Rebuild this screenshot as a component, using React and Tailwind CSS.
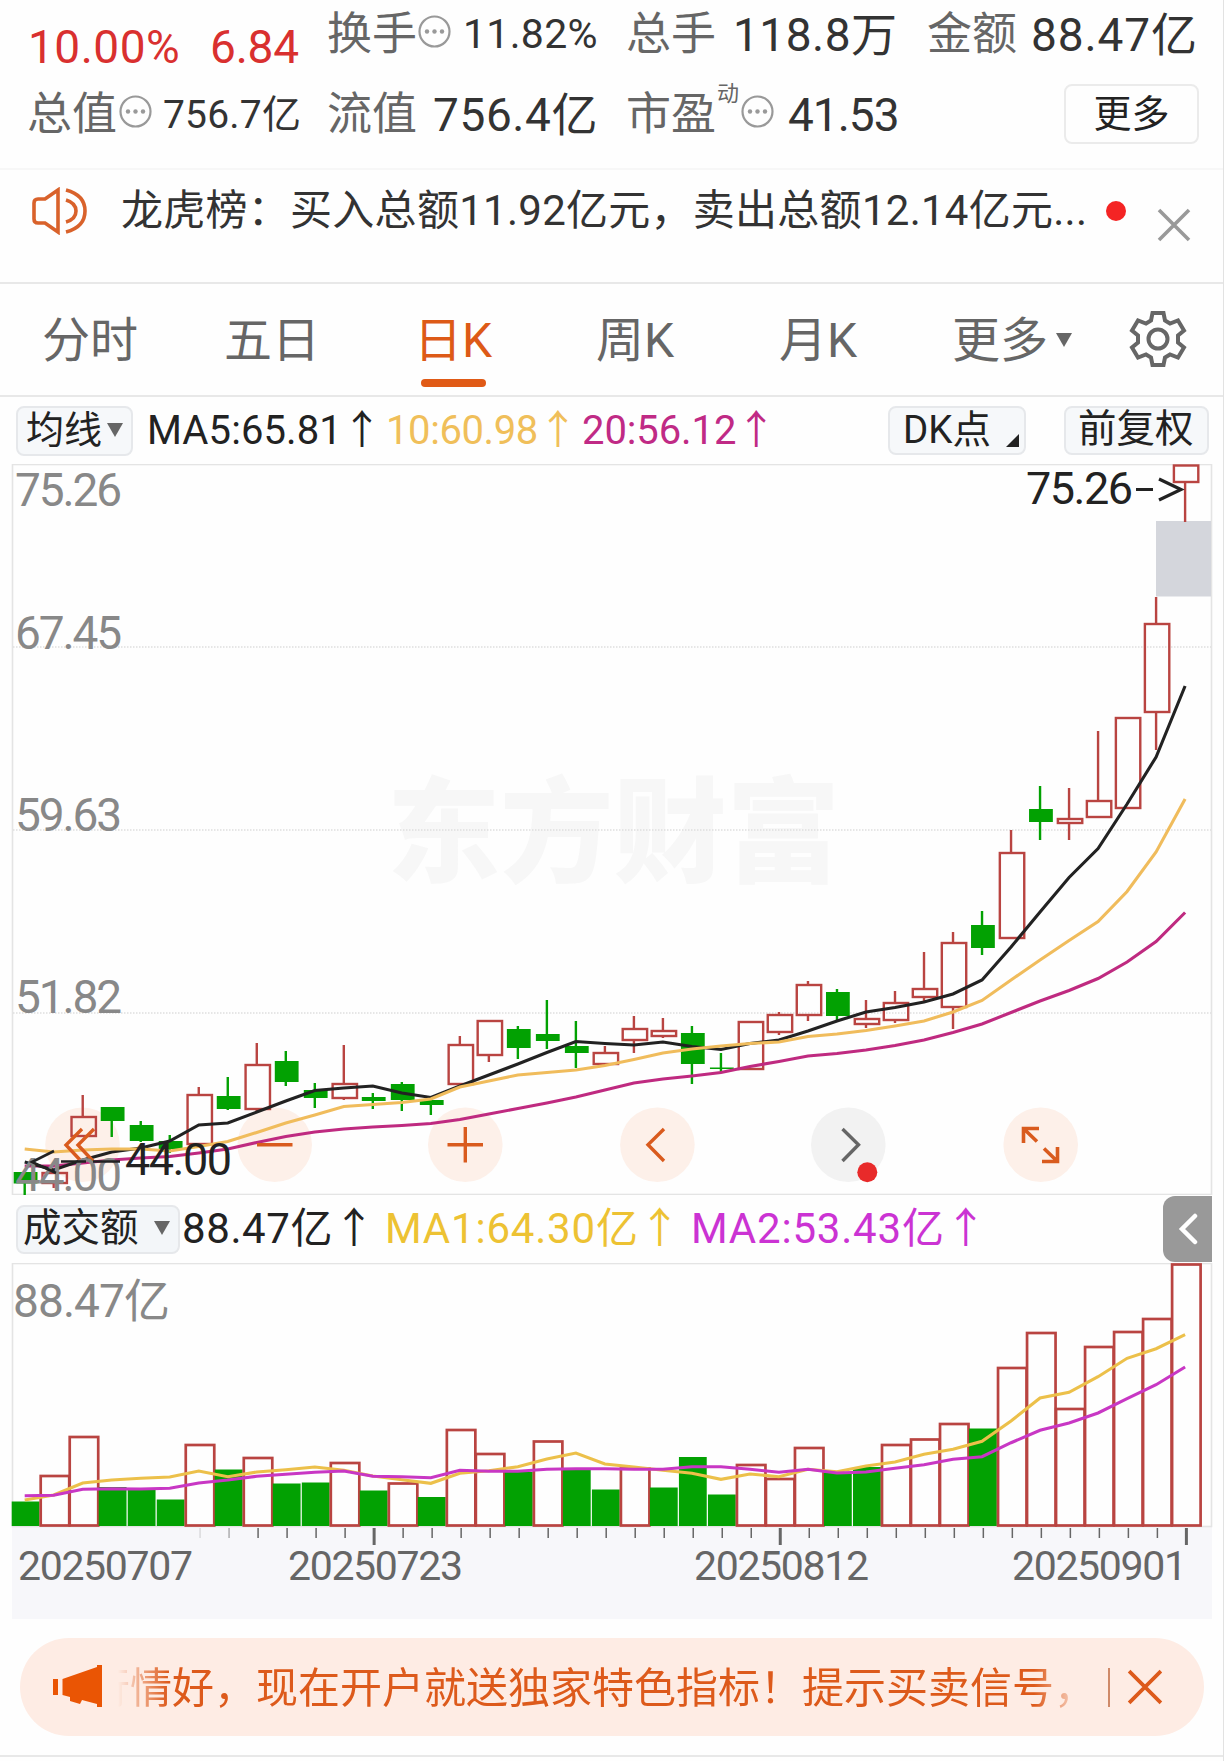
// Daily candles, in chart pixels: [up, high, bodyTop, bodyBottom, low]
const CANDLES = [
  [0, 1172, 1172, 1183.5, 1195], [1, 1173, 1173, 1183, 1188], [1, 1095, 1117, 1136, 1136], [0, 1107, 1107, 1121, 1137],
  [0, 1121, 1125, 1141, 1142], [0, 1135, 1141, 1149, 1153], [1, 1087, 1095, 1144, 1144], [0, 1077, 1096, 1109, 1110],
  [1, 1043, 1065, 1109, 1111], [0, 1051, 1061, 1082, 1086], [0, 1083, 1090, 1098, 1108], [1, 1045, 1084, 1098, 1100],
  [0, 1093, 1097, 1101, 1109], [0, 1082, 1084, 1100, 1111], [0, 1100, 1100, 1105, 1115], [1, 1036, 1045, 1084, 1086],
  [1, 1020, 1021, 1055, 1062], [0, 1026, 1029, 1048, 1059], [0, 1000, 1034, 1041, 1049], [0, 1021, 1046, 1053, 1068],
  [1, 1046, 1053, 1064, 1064], [1, 1016, 1029, 1040, 1053], [1, 1018, 1031, 1036, 1038], [0, 1026, 1033, 1064, 1084],
  [0, 1053, 1067.5, 1069, 1072], [1, 1022, 1022, 1069, 1069], [1, 1012, 1015, 1032, 1035], [1, 981, 985, 1015, 1021],
  [0, 989, 992, 1016, 1020], [1, 1000, 1019, 1024, 1028], [1, 991, 1003, 1020, 1023], [1, 952, 989, 997, 1002],
  [1, 932, 943, 1007, 1029], [0, 911, 925, 948, 955], [1, 830, 853, 938, 938], [0, 786, 809, 822, 840],
  [1, 788, 819, 823, 840], [1, 731, 801, 817, 817], [1, 718, 718, 808, 808], [1, 597, 624, 712, 750],
  [1, 465, 465.5, 482, 522],
];

const MA5 = [
  1162, 1170, 1160, 1152, 1148, 1141, 1125, 1123, 1112, 1101, 1090.5, 1088, 1086, 1093, 1097.5, 1086, 1075, 1064, 1052.5,
  1041.5, 1043.5, 1045, 1042, 1046.5, 1049.5, 1043.5, 1040, 1031, 1021, 1012, 1007.5, 1002, 994, 980, 947, 912, 877.5,
  848.5, 804, 757, 686,
];
const MA10 = [
  1149, 1152, 1150, 1149, 1149, 1151, 1146.5, 1141.5, 1132.5, 1123, 1115, 1106.5, 1104.5, 1102.5, 1099, 1087, 1081, 1075,
  1072.5, 1070, 1065.5, 1059.5, 1053, 1049, 1046, 1043.5, 1042, 1036.5, 1034, 1030.5, 1026, 1021, 1012, 1000.5, 980, 960,
  940.5, 921.5, 891.5, 852, 799,
];
const MA20 = [
  1166, 1166, 1163, 1160, 1158, 1156.5, 1153, 1149, 1142.5, 1136.5, 1132, 1129, 1127, 1125.5, 1123.5, 1119.5, 1114, 1108.5,
  1103, 1097, 1090, 1083, 1079, 1076, 1072.5, 1066.5, 1061.5, 1056, 1053.5, 1050, 1045.5, 1040, 1032.5, 1024, 1012.5, 1001,
  990.5, 978.5, 962, 941.5, 912.5,
];

// Top of every volume bar
const VOLUMES = [
  1501.5, 1476, 1437, 1487, 1490, 1499.5, 1445, 1469.5, 1458, 1483.5, 1482.5, 1463, 1490.5, 1483.5, 1497, 1430, 1454, 1472,
  1441.5, 1470, 1489.5, 1468.5, 1487.5, 1457, 1494.5, 1465, 1479, 1448, 1473, 1467, 1445, 1439.5, 1424, 1428.5, 1368, 1333,
  1409, 1347, 1332, 1319, 1264.5,
];
// Days drawn as solid green volume bars
const VOL_DOWN = [0, 3, 4, 5, 7, 9, 10, 12, 14, 17, 19, 20, 22, 23, 24, 28, 29, 33];
const VOL_MA1 = [
  1500, 1495, 1483, 1480, 1478.3, 1477, 1471, 1476.7, 1472, 1469.7, 1467, 1470.3, 1476, 1479.7, 1483.3, 1473.3, 1470.7,
  1466.7, 1459, 1453, 1464, 1467, 1470.3, 1473.3, 1479.3, 1474, 1476.7, 1469.3, 1471.7, 1466, 1462, 1454.3, 1449.3, 1441.3,
  1421, 1398, 1392.3, 1376.7, 1358.3, 1348.7, 1334.7,
];
const VOL_MA2 = [
  1495.7, 1495.3, 1489.3, 1488.7, 1489, 1488.3, 1483, 1480, 1476.3, 1474.3, 1472.3, 1471, 1476.3, 1476.7, 1477.7, 1470.3,
  1471.3, 1471.3, 1469.3, 1468.7, 1468.7, 1469.3, 1469.3, 1466.7, 1466.7, 1469.3, 1472.3, 1469.3, 1473, 1472, 1468.3,
  1464.7, 1459.3, 1456.7, 1442.7, 1430.3, 1423, 1413, 1398.7, 1384.7, 1367,
];

const RED = "#b94441";
const GREEN = "#02a102";

const xAt = (i) => 24.7 + i * 29.01;
const toPoints = (ys) => ys.map((y, i) => `${xAt(i)},${y}`).join(" ");

function Dots() {
  return (
    <svg width="33" height="33" viewBox="0 0 33 33" className="mb-[7px] shrink-0">
      <circle cx="16.5" cy="16.5" r="15" fill="none" stroke="#999" strokeWidth="2.2" />
      <circle cx="9" cy="16.5" r="2.2" fill="#999" />
      <circle cx="16.5" cy="16.5" r="2.2" fill="#999" />
      <circle cx="24" cy="16.5" r="2.2" fill="#999" />
    </svg>
  );
}

function Close({ size, color, width }) {
  return (
    <svg width={size} height={size} viewBox="0 0 34 34" className="shrink-0">
      <path d="M2 2 32 32M32 2 2 32" stroke={color} strokeWidth={width} fill="none" />
    </svg>
  );
}

function Triangle({ className }) {
  return (
    <svg width="16" height="14" viewBox="0 0 16 14" className={className}>
      <path d="M0 0H16L8 14Z" fill="#666" />
    </svg>
  );
}

function Quotes() {
  return (
    <div className="h-[170px] border-b-2 border-[#f7f7f7] text-[#333]">
      <div className="grid h-[70px] grid-cols-[327px_299px_301px_297px] items-center whitespace-nowrap">
        <div className="flex pl-[28px] pt-[23px] text-[46px] leading-[46px] text-[#d9302f]">
          <span className="w-[182px] tracking-[0.5px]">10.00%</span>
          <span className="tracking-[-0.2px]">6.84</span>
        </div>
        <div className="flex items-center">
          <span className="w-[91px] text-[45px] leading-[60px] text-[#666]">换手</span>
          <Dots />
          <span className="ml-[12px] text-[41px] tracking-[0.3px]">11.82%</span>
        </div>
        <div className="flex items-center">
          <span className="w-[107px] text-[45px] leading-[60px] text-[#666]">总手</span>
          <span className="text-[46px] tracking-[0.5px]">118.8万</span>
        </div>
        <div className="flex items-center">
          <span className="w-[104px] text-[45px] leading-[60px] text-[#666]">金额</span>
          <span className="text-[46px] tracking-[0.9px]">88.47亿</span>
        </div>
      </div>
      <div className="grid h-[90px] grid-cols-[327px_299px_301px_297px] items-center whitespace-nowrap">
        <div className="flex items-center pl-[27px]">
          <span className="w-[92px] text-[45px] leading-[60px] text-[#666]">总值</span>
          <Dots />
          <span className="ml-[11px] text-[39px] tracking-[0.2px]">756.7亿</span>
        </div>
        <div className="flex items-center">
          <span className="w-[106px] text-[45px] leading-[60px] text-[#666]">流值</span>
          <span className="text-[46px] tracking-[0.6px]">756.4亿</span>
        </div>
        <div className="flex items-center">
          <span className="w-[91px] text-[45px] leading-[60px] text-[#666]">市盈</span>
          <span className="w-[24px] pb-[42px] text-[22px] leading-[22px] text-[#666]">动</span>
          <Dots />
          <span className="ml-[14px] text-[46px] tracking-[-1px]">41.53</span>
        </div>
        <div className="flex items-center pb-[3px] pl-[137px]">
          <button className="h-[60px] w-[135px] rounded-[8px] border-2 border-[#ebebeb] text-[38px] leading-[52px] text-[#222]">
            更多
          </button>
        </div>
      </div>
    </div>
  );
}

function Notice() {
  return (
    <div className="flex h-[114px] items-start whitespace-nowrap border-b-2 border-[#e8e8e8] pl-[31px]">
      <svg width="57" height="48" viewBox="0 0 57 48" className="mt-[17px] shrink-0" fill="none" stroke="#d9622b" strokeWidth="3.6">
        <path d="M27 3 14 12H7Q3 12 3 16V32Q3 36 7 36H14L27 45Z" />
        <path d="M35 13Q45 16 45 24T35 35M35 3Q54 8 54 24T35 45" />
      </svg>
      <span className="ml-[33px] w-[972px] text-[42px] leading-[82px] tracking-[0.27px] text-[#333]">
        龙虎榜：买入总额11.92亿元，卖出总额12.14亿元...
      </span>
      <span className="ml-[13px] mt-[31px] h-[20px] w-[20px] shrink-0 rounded-full bg-[#f42424]" />
      <span className="ml-[31px] mt-[38px]">
        <Close size={34} color="#999" width={3.6} />
      </span>
    </div>
  );
}

function Tabs() {
  return (
    <div className="flex h-[113px] whitespace-nowrap border-b-2 border-[#e8e8e8] pl-[42px] text-[48px] leading-[113px] text-[#666]">
      <span className="w-[182px]">分时</span>
      <span className="w-[190px]">五日</span>
      <span className="relative w-[182px] text-[#dd5a17]">
        日K
        <i className="absolute left-[7px] top-[95px] h-[8px] w-[65px] rounded-full bg-[#e05a16]" />
      </span>
      <span className="w-[183px]">周K</span>
      <span className="w-[173px]">月K</span>
      <span className="w-[104px]">更多</span>
      <Triangle className="mt-[49px]" />
      <svg width="60" height="60" viewBox="0 0 60 60" className="ml-[56px] mt-[25px]" fill="none" stroke="#666" strokeWidth="4">
        <path d="M24.5 4H35.5L37 11.5L42 14.5L50 11.500L56 21.5L50 26.5V33.5L56 38.5L50 48.5L42 45.5L37 48.5L35.5 56H24.5L23 48.5L18 45.5L10 48.5L4 38.5L10 33.5V26.5L4 21.5L10 11.5L18 14.5L23 11.5Z" />
        <circle cx="30" cy="30" r="9.5" />
      </svg>
    </div>
  );
}

function MaBar() {
  return (
    <div className="flex h-[67px] items-center whitespace-nowrap pl-[16px] text-[40px] leading-[60px]">
      <div className="flex h-[50px] w-[117px] items-center rounded-[8px] border-2 border-[#e6e8eb] bg-[#f6f8fa] pb-[2px] pl-[8px] text-[38px] text-[#222]">
        <span className="w-[81px]">均线</span>
        <Triangle />
      </div>
      <span className="ml-[14px] w-[239px] tracking-[0.1px] text-[#222]">MA5:65.81↑</span>
      <span className="w-[196px] tracking-[-0.4px] text-[#f0bf5a]">10:60.98↑</span>
      <span className="w-[306px] tracking-[-0.1px] text-[#c02a85]">20:56.12↑</span>
      <div className="flex h-[49px] w-[138px] items-center rounded-[8px] border-2 border-[#e6e8eb] bg-[#f6f8fa] pb-[2px] pl-[13px] text-[38.5px] text-[#222]">
        <span className="w-[103px]">DK点</span>
        <svg width="13" height="13" viewBox="0 0 13 13" className="mt-[22px]">
          <path d="M13 0V13H0Z" fill="#222" />
        </svg>
      </div>
      <div className="ml-[38px] flex h-[49px] w-[145px] items-center rounded-[8px] border-2 border-[#e6e8eb] bg-[#f6f8fa] pb-[3px] pl-[12px] text-[38.5px] text-[#222]">
        前复权
      </div>
    </div>
  );
}

function PriceChart() {
  return (
    <svg width="1224" height="731" viewBox="0 464 1224 731" className="block">
      <text x="387" y="873" fontSize="114" fontWeight="900" fill="#f7f7f7" textLength="453" lengthAdjust="spacingAndGlyphs">
        东方财富
      </text>
      <rect x="12.5" y="464.5" width="1199" height="730" fill="none" stroke="#e4e4e4" strokeWidth="1.6" />
      {[647, 830, 1013].map((y) => (
        <line key={y} x1="13" x2="1211" y1={y} y2={y} stroke="#dedede" strokeWidth="1.4" strokeDasharray="1.5 1.5" />
      ))}

      {/* control discs */}
      {[82.5, 274.7, 465.3, 657.4, 848.3, 1040.7].map((x, i) => (
        <circle key={x} cx={x} cy="1144.7" r="37.3" fill={i === 4 ? "#f2f2f2" : "#fdf0e9"} />
      ))}

      <rect x="1156" y="521" width="55" height="75.5" fill="#d4d6dc" />

      {CANDLES.map(([up, high, top, bottom, low], i) => (
        <g key={i}>
          {up ? (
            <>
              <path d={`M${xAt(i)} ${high}V${top}M${xAt(i)} ${bottom}V${low}`} stroke={RED} strokeWidth="2.4" />
              <rect x={xAt(i) - 11.2} y={top} width="24.4" height={bottom - top} fill="none" stroke={RED} strokeWidth="2.4" />
            </>
          ) : (
            <>
              <path d={`M${xAt(i)} ${high}V${low}`} stroke={GREEN} strokeWidth="2.4" />
              <rect x={xAt(i) - 11} y={top} width="23.8" height={bottom - top} fill={GREEN} />
            </>
          )}
        </g>
      ))}

      <polyline points={toPoints(MA20)} fill="none" stroke="#bf2a80" strokeWidth="3.1" />
      <polyline points={toPoints(MA5)} fill="none" stroke="#222" strokeWidth="3.1" />
      <polyline points={toPoints(MA10)} fill="none" stroke="#f0bc5c" strokeWidth="3.1" />

      {/* control icons */}
      <g fill="none" stroke="#d95b1e" strokeWidth="3.4">
        <path d="M82 1129 66 1145 81 1161M94 1129 78 1145 93 1161" />
        <path d="M257 1144.7H292.5M447.5 1144.7H483M465.3 1127V1162.5" />
        <path d="M664 1129 648 1144.7 664 1161" />
        <path d="M1023.5 1143V1128.5H1039M1024 1129 1037 1141.5M1057.500 1147V1161.5H1042M1057 1161 1044 1148.5" strokeWidth="3.6" />
      </g>
      <path d="M842.5 1129 858.5 1144.7 842.5 1161" fill="none" stroke="#666" strokeWidth="3.4" />
      <circle cx="867.3" cy="1172.3" r="10" fill="#e82a2a" />

      {/* price scale */}
      <g fontSize="46" fill="#888">
        <text x="15" y="506" textLength="107">75.26</text>
        <text x="15" y="649" textLength="107">67.45</text>
        <text x="15" y="831" textLength="107">59.63</text>
        <text x="15" y="1013" textLength="107">51.82</text>
        <text x="15" y="1191" textLength="107">44.00</text>
      </g>

      {/* extremes */}
      <g fontSize="45" fill="#222">
        <text x="1026" y="504" textLength="107">75.26</text>
        <text x="125" y="1175" textLength="107">44.00</text>
      </g>
      <path d="M1136 489.5H1153M1159 479 1181 489.5 1159 500" fill="none" stroke="#222" strokeWidth="3.2" />
      <path d="M54 1151 32 1162 56 1173M61 1161.5H86M93 1161.5H120" fill="none" stroke="#222" strokeWidth="2.6" />
    </svg>
  );
}

function AmountBar() {
  return (
    <div className="flex h-[68px] items-center whitespace-nowrap pl-[16px] text-[42px] leading-[60px]">
      <div className="flex h-[49px] w-[164px] items-center rounded-[8px] border-2 border-[#e6e8eb] bg-[#f3f6f9] pb-[2px] pl-[5px] text-[38.5px] text-[#222]">
        <span className="w-[131px]">成交额</span>
        <Triangle />
      </div>
      <span className="ml-[2px] w-[203px] tracking-[0.6px] text-[#222]">88.47亿↑</span>
      <span className="w-[306px] tracking-[0.8px] text-[#edc233]">MA1:64.30亿↑</span>
      <span className="w-[472px] tracking-[0.8px] text-[#cb33d3]">MA2:53.43亿↑</span>
      <div className="flex h-[66px] w-[49px] items-center justify-center rounded-l-[12px] bg-[#999]">
        <svg width="20" height="34" viewBox="0 0 20 34" fill="none" stroke="#fff" strokeWidth="4.5" strokeLinecap="round">
          <path d="M17 4 4 17 17 30" />
        </svg>
      </div>
    </div>
  );
}

function VolumeChart() {
  return (
    <svg width="1224" height="356" viewBox="0 1263 1224 356" className="block">
      <rect x="12" y="1527" width="1200" height="92" fill="#f7f7fa" />
      <rect x="12.5" y="1263.5" width="1199" height="263" fill="none" stroke="#e4e4e4" strokeWidth="1.6" />
      {VOLUMES.map((top, i) =>
        VOL_DOWN.includes(i) ? (
          <rect key={i} x={xAt(i) - 13} y={top} width="27.8" height={1526 - top} fill={GREEN} />
        ) : (
          <rect key={i} x={xAt(i) - 13} y={top} width="28.5" height={1525.5 - top} fill="none" stroke={RED} strokeWidth="2.7" />
        )
      )}
      <polyline points={toPoints(VOL_MA1)} fill="none" stroke="#ecc04a" strokeWidth="3.1" />
      <polyline points={toPoints(VOL_MA2)} fill="none" stroke="#c837c4" strokeWidth="3.1" />
      <text x="13" y="1317" fontSize="46" fill="#888" textLength="157">88.47亿</text>

      {/* date axis */}
      {VOLUMES.map((_, i) => {
        if (i < 6) return null;
        const major = i === 12 || i === 26 || i === 40;
        return (
          <line
            key={i}
            x1={xAt(i) + 1.3}
            x2={xAt(i) + 1.3}
            y1="1528"
            y2={major ? 1545 : 1538}
            stroke="#666"
            strokeWidth={major ? 3 : 1.5}
            opacity={i === 6 ? 0.2 : i === 7 ? 0.5 : 1}
          />
        );
      })}
      <g fontSize="41" fill="#666">
        <text x="18" y="1580" textLength="175">20250707</text>
        <text x="288" y="1580" textLength="175">20250723</text>
        <text x="694" y="1580" textLength="175">20250812</text>
        <text x="1012" y="1580" textLength="175">20250901</text>
      </g>
    </svg>
  );
}

function Banner() {
  return (
    <div className="ml-[20px] mt-[19px] flex h-[98px] w-[1184px] items-center rounded-full bg-[#feece4] pl-[32px]">
      <svg width="51" height="50" viewBox="0 0 51 50" className="shrink-0" fill="#ea5504">
        <path d="M1 17H6V33H1ZM10.5 17 45 5V3H50V45H45V42L30 38 28 42 18 39V35L10.5 33Z" />
      </svg>
      <div className="ml-[15px] w-[966px] overflow-hidden whitespace-nowrap pt-[3px] text-[42px] leading-[80px] text-[#dd5a1b] [mask-image:linear-gradient(to_right,transparent,black_50px,black_916px,transparent)]">
        <span className="-ml-[30px]">行情好，现在开户就送独家特色指标！提示买卖信号，</span>
      </div>
      <span className="ml-[24px] h-[39px] w-[2px] bg-[#cf8a69]" />
      <span className="ml-[17px]">
        <Close size={36} color="#dd5a1b" width={3.5} />
      </span>
    </div>
  );
}

export default function App() {
  return (
    <div className="relative h-[1761px] w-[1224px] overflow-hidden border-r border-[#e2e2e2] bg-[#fefefe] font-['Roboto','Noto_Sans_CJK_SC',sans-serif]">
      <Quotes />
      <Notice />
      <Tabs />
      <MaBar />
      <PriceChart />
      <AmountBar />
      <VolumeChart />
      <Banner />
      <div className="mt-[19px] h-[2px] bg-[#e8e8e8]" />
    </div>
  );
}
